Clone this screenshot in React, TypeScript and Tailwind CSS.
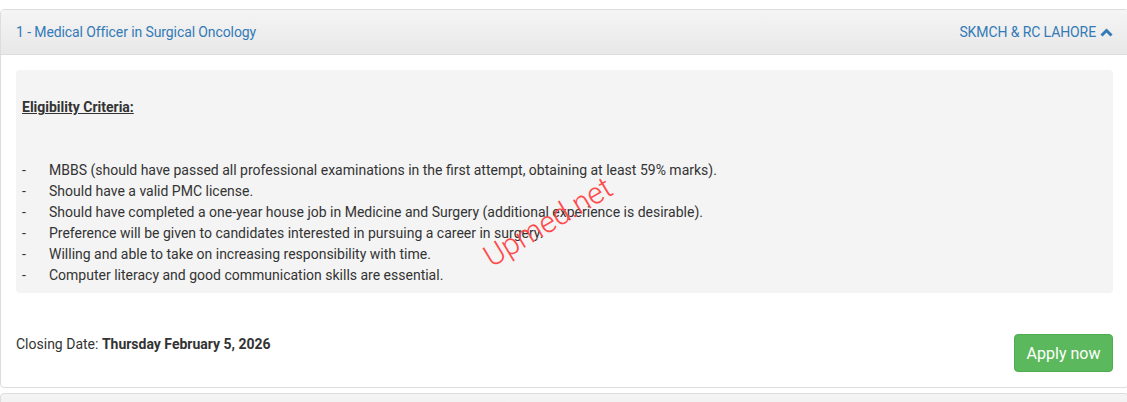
import React from "react";

const items = [
  "MBBS (should have passed all professional examinations in the first attempt, obtaining at least 59% marks).",
  "Should have a valid PMC license.",
  "Should have completed a one-year house job in Medicine and Surgery (additional experience is desirable).",
  "Preference will be given to candidates interested in pursuing a career in surgery.",
  "Willing and able to take on increasing responsibility with time.",
  "Computer literacy and good communication skills are essential.",
];

export default function App() {
  return (
    <div
      className="w-[1127px] h-[402px] overflow-hidden bg-white text-[14px] text-[#333]"
      style={{ fontFamily: "Roboto, 'Liberation Sans', sans-serif" }}
    >
      <div className="mt-[9px] w-[1129px] rounded-[4px] border border-[#dddddd] bg-white">
        <div className="flex h-[45px] items-center justify-between rounded-t-[3px] border-b border-[#dddddd] bg-gradient-to-b from-[#f5f5f5] to-[#e8e8e8] px-[15px] text-[#337ab7]">
          <span className="tracking-[-0.1px]">1 - Medical Officer in Surgical Oncology</span>
          <span className="flex items-center gap-[4px] tracking-[-0.1px]">
            SKMCH &amp; RC LAHORE
            <svg width="13" height="9" viewBox="0 0 13 9">
              <path d="M1.5 7.5 L6.5 2.5 L11.5 7.5" fill="none" stroke="#337ab7" strokeWidth="3" strokeLinecap="butt" strokeLinejoin="miter" />
            </svg>
          </span>
        </div>
        <div className="relative p-[15px]">
          <div className="rounded-[4px] bg-[#f4f4f4] px-[6px] pt-[27px] pb-[7px] leading-[21px]">
            <div className="font-bold underline">Eligibility Criteria:</div>
            <div className="mt-[42px]">
              {items.map((t) => (
                <div key={t} className="flex">
                  <span className="w-[27px] shrink-0">-</span>
                  <span>{t}</span>
                </div>
              ))}
            </div>
          </div>
          <div className="mt-[41px] flex items-start justify-between leading-[21px]">
            <div>
              Closing Date: <span className="font-bold">Thursday February 5, 2026</span>
            </div>
            <button className="h-[38px] w-[99px] rounded-[4px] border border-[#4cae4c] bg-[#5cb85c] text-[16px] text-white">
              Apply now
            </button>
          </div>
          <div className="pointer-events-none absolute left-[547px] top-[167px] h-0 w-0">
            <span className="absolute left-0 top-0 -translate-x-1/2 -translate-y-1/2 -rotate-[31deg] whitespace-nowrap text-[30px] font-light leading-none text-[#ff4a4a]">
              Upmed.net
            </span>
          </div>
        </div>
      </div>
      <div className="mt-[5px] h-[40px] w-[1129px] rounded-t-[4px] border border-[#dddddd] bg-gradient-to-b from-[#f5f5f5] to-[#e8e8e8]"></div>
    </div>
  );
}
